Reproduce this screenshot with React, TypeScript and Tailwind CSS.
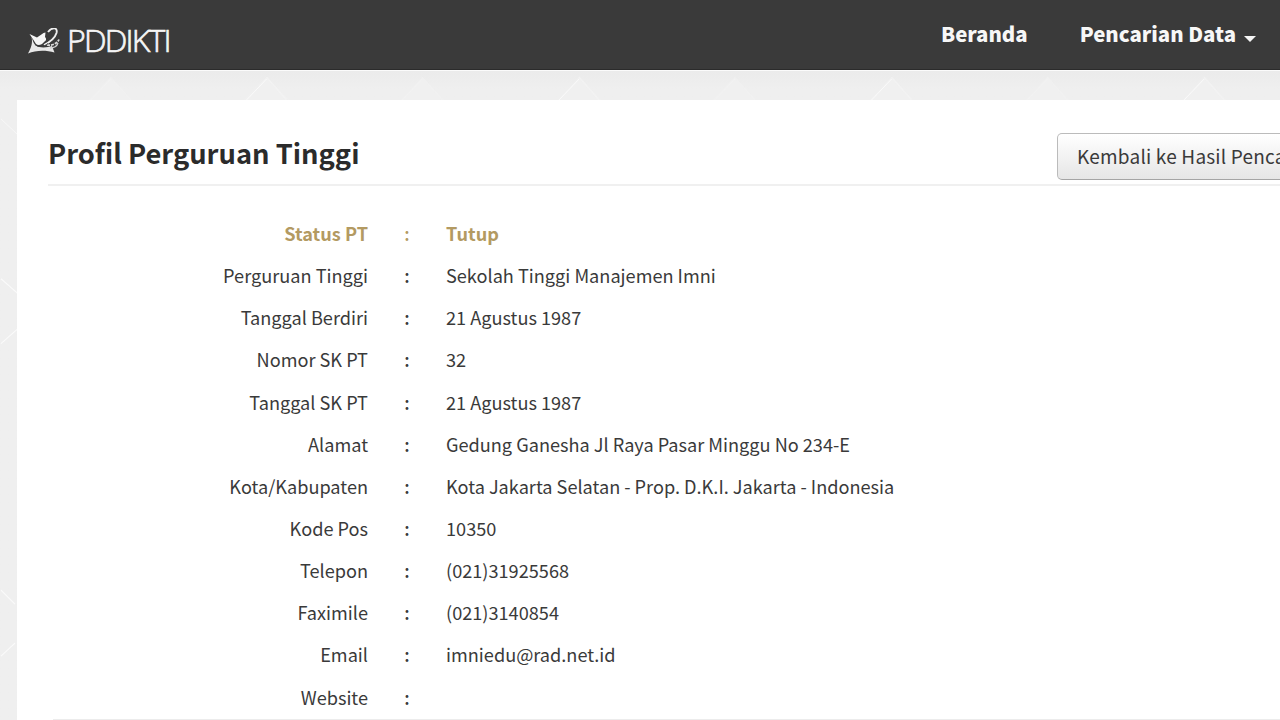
interface Row {
  label: string;
  value: string;
  highlight?: boolean;
}

const rows: Row[] = [
  { label: "Status PT", value: "Tutup", highlight: true },
  { label: "Perguruan Tinggi", value: "Sekolah Tinggi Manajemen Imni" },
  { label: "Tanggal Berdiri", value: "21 Agustus 1987" },
  { label: "Nomor SK PT", value: "32" },
  { label: "Tanggal SK PT", value: "21 Agustus 1987" },
  { label: "Alamat", value: "Gedung Ganesha Jl Raya Pasar Minggu No 234-E" },
  { label: "Kota/Kabupaten", value: "Kota Jakarta Selatan - Prop. D.K.I. Jakarta - Indonesia" },
  { label: "Kode Pos", value: "10350" },
  { label: "Telepon", value: "(021)31925568" },
  { label: "Faximile", value: "(021)3140854" },
  { label: "Email", value: "imniedu@rad.net.id" },
  { label: "Website", value: "" },
];

const peaks = [110, 266, 422, 579, 735, 892, 1048, 1205];

function Pattern() {
  return (
    <svg className="absolute inset-0 h-full w-full" viewBox="0 0 1280 650" fill="none">
      {peaks.map((x, i) => (
        <g key={x}>
          <path d={`M${x - 24} 30 L${x} 6 L${x + 24} 30Z`} fill="#f0f0f0" />
          <path
            d={`M${x - 21} 30 L${x} 8`}
            stroke="#fafafa"
            strokeWidth="1"
            opacity={i % 2 ? 0.9 : 0.2}
          />
          <path d={`M${x} 6 L${x + 20} 29`} stroke="#f5f5f5" strokeWidth="1.5" opacity={i % 2 ? 0.5 : 0.2} />
        </g>
      ))}
      <path d="M0 222 L17 238 V243 L0 258Z M0 535 L17 551 V570 L0 586Z" fill="#efefef" />
      <path d="M0 208 L17 223 M0 273 L17 258 M0 520 L14 534 M0 586 L14 573" stroke="#fafafa" strokeWidth="1.2" />
      <path d="M0 48 L17 64" stroke="#f7f7f7" strokeWidth="1" />
    </svg>
  );
}

function Logo() {
  return (
    <svg className="h-[27px] w-[33px] shrink-0" viewBox="0 0 33 27" fill="none">
      <path d="M2.500 6 L10 9.500 C13 8 16 4.500 18.500 4.500 L18 9 C20 11 19 13 17 14 C15 17 11 18 9 16 L6.500 12 Z" fill="#f6f6f6" />
      <path d="M4.500 9 C6 13 7 18 12 19 C17 20 22 19 25 18 L27.500 24.500 C19 22 9 22 1 25.500 C4 20 6 15 4.500 9Z" fill="#e8e8e8" />
      <path d="M21 4 C25 -1 31 -1 29.500 5 C28 10 23 14 17 17" stroke="#efefef" strokeWidth="1.9" />
      <path d="M20 17 C24 18 30 16 32 11.500" stroke="#dcdcdc" strokeWidth="1.8" strokeDasharray="3 1" />
      <path d="M23 20 C27 20 30 18 31 15" stroke="#d2d2d2" strokeWidth="1.300" />
      <path d="M8 16.500 C12 19.500 17 19 21 15.500" stroke="#3b3b3b" strokeWidth="1" />
    </svg>
  );
}

export default function App() {
  return (
    <div className="flex h-[720px] w-[1280px] flex-col overflow-hidden bg-[#eeeeee] font-['Noto_Sans_CJK_JP','Noto_Sans_CJK_SC',sans-serif] text-[18.150px] text-[#3a3a3a]">
      <header className="flex h-[70px] shrink-0 justify-between border-b border-[#2b2b2b] bg-[#3a3a3a] text-white">
        <div className="flex pt-[28px] pl-[27px]">
          <Logo />
          <span className="-mt-px ml-[7px] font-['Open_Sans',sans-serif] text-[32px] leading-[26px] font-light tracking-[-1.800px] text-[#f5f5f5] [-webkit-text-stroke:0.7px_#f5f5f5]">
            PDDIKTI
          </span>
        </div>
        <nav className="flex pt-[19px] pr-[24px] text-[20.400px] leading-[28px] font-black text-[#f7f7f7]">
          <a className="mr-[52px]">Beranda</a>
          <a className="flex">
            Pencarian Data
            <span className="mt-[17px] ml-[8px] h-0 w-0 border-x-[6px] border-t-[6px] border-x-transparent border-t-[#f5f5f5]" />
          </a>
        </nav>
      </header>

      <div className="relative h-[650px] border-t border-[#fbfbfb] bg-linear-to-b from-[#ebebeb] to-[#efefef] to-[18px] pt-[29px] pl-[17px]">
        <Pattern />
        <main className="relative h-[650px] bg-white pl-[31px]">
          <div className="flex h-[86px] items-start justify-between border-b-2 border-[#f0f0f0]">
            <h1 className="pt-[32px] text-[27.300px] leading-[40px] font-bold whitespace-nowrap text-[#2b2b2b]">
              Profil Perguruan Tinggi
            </h1>
            <button className="mt-[33px] -mr-[60px] h-[47px] w-[283px] rounded-[5px] border border-[#bbbbbb] border-b-[#a5a5a5] bg-linear-to-b from-white to-[#e6e6e6] pl-[19px] text-left text-[19px] leading-[43px] tracking-[0.200px] whitespace-nowrap">
              <span className="relative -top-px">Kembali ke Hasil Pencarian</span>
            </button>
          </div>

          <dl className="pt-[26.500px]">
            {rows.map((row) => (
              <div
                key={row.label}
                className={`flex h-[42.150px] items-center whitespace-nowrap ${
                  row.highlight ? "font-bold text-[#b39a62]" : ""
                }`}
              >
                <dt className="w-[320px] text-right">{row.label}</dt>
                <span className="w-[78px] text-center font-medium">:</span>
                <dd>{row.value}</dd>
              </div>
            ))}
          </dl>
          <div className="mt-[0.500px] ml-[5px] h-[2px] bg-[#ececec]" />
        </main>
      </div>
    </div>
  );
}
